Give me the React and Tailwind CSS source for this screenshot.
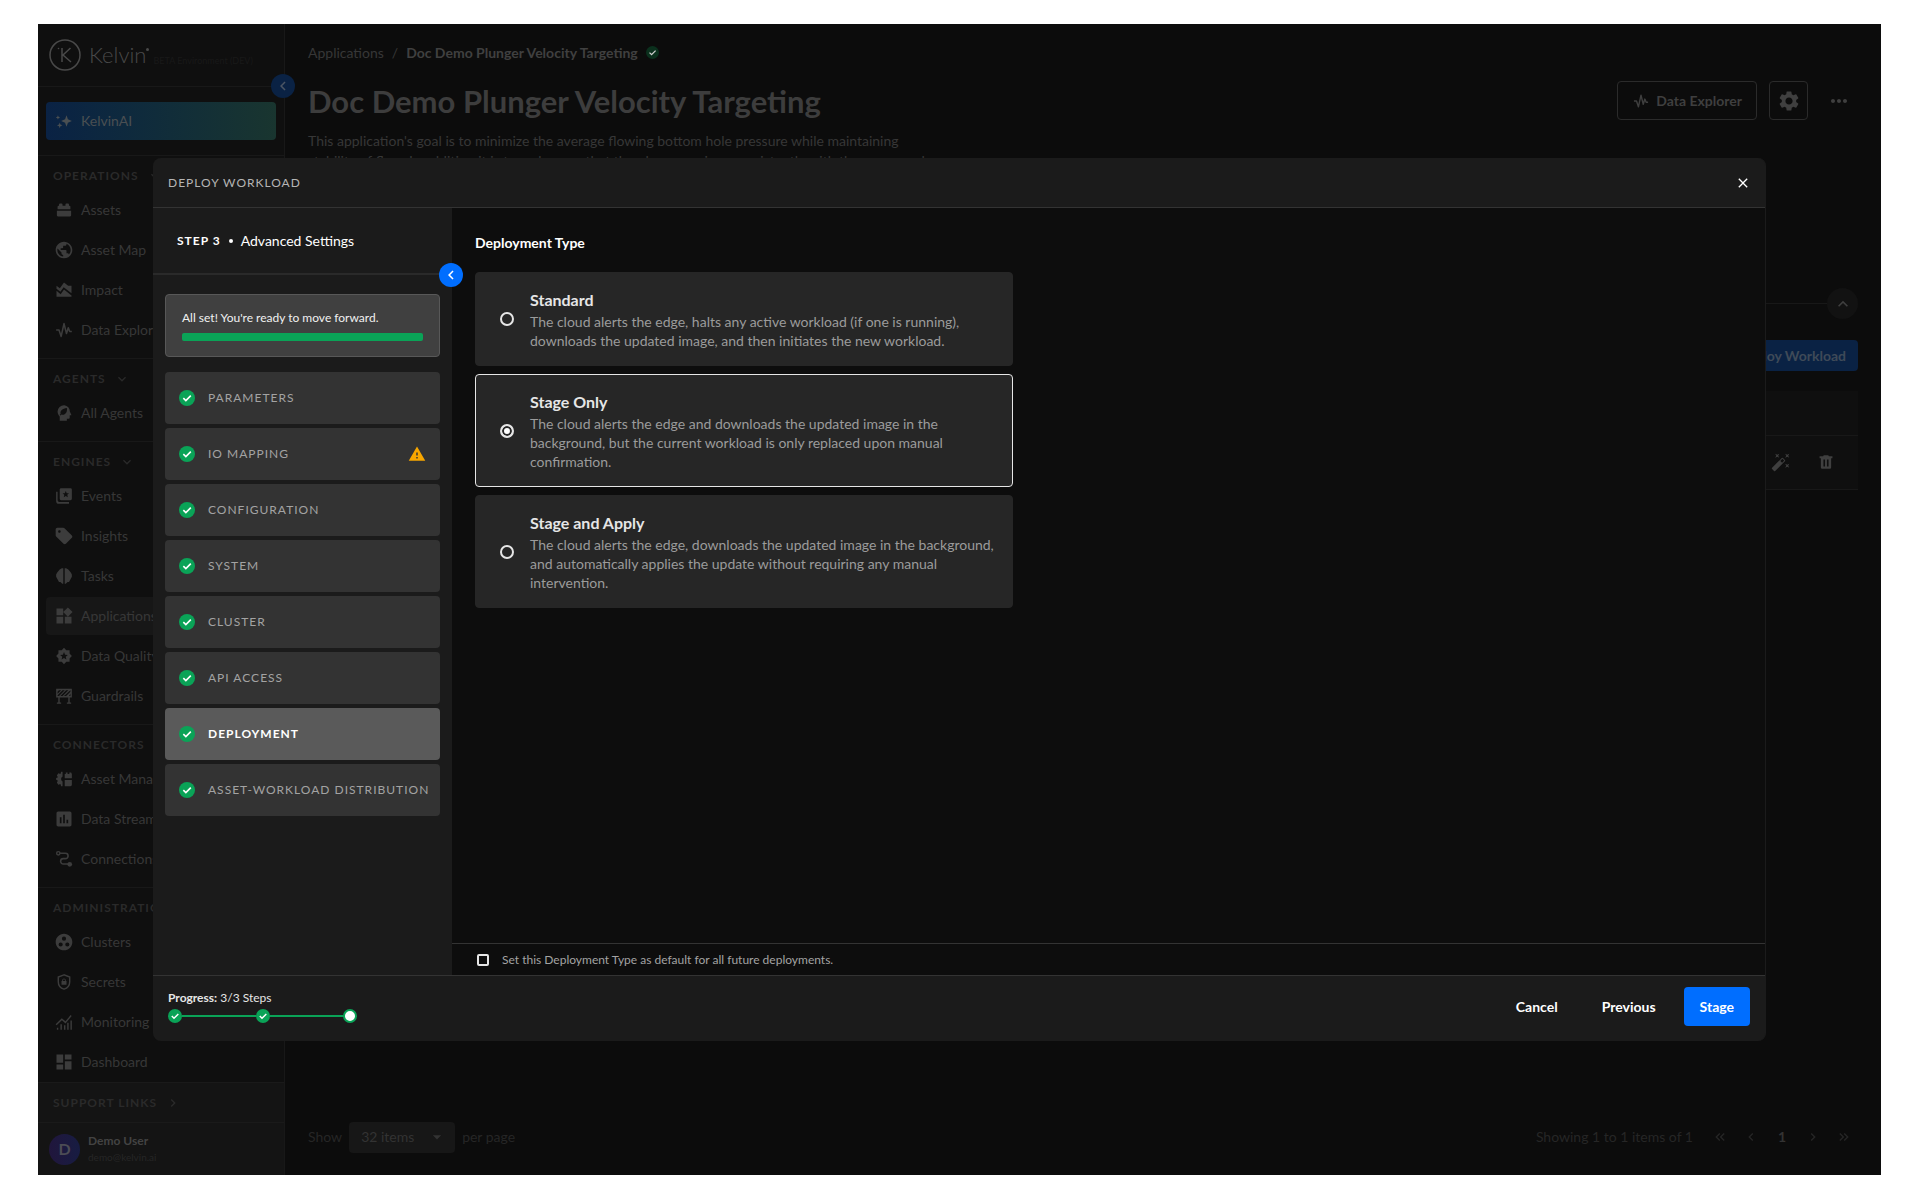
import { useState } from 'react'
import {
  MdPublic, MdAreaChart, MdSell, MdWidgets, MdAssessment, MdGroupWork, MdDashboard,
  MdSettings, MdMoreHoriz, MdWarning, MdClose, MdChevronLeft, MdChevronRight,
  MdExpandMore, MdExpandLess, MdKeyboardDoubleArrowLeft, MdKeyboardDoubleArrowRight,
  MdArrowDropDown, MdAutoFixHigh
} from 'react-icons/md'

function Icon({ children, viewBox = '-2 -2 28 28', className = 'size-[18px]' }) {
  return (
    <svg viewBox={viewBox} fill="currentColor" className={className} aria-hidden="true">
      {children}
    </svg>
  )
}

const AssetsIcon = (props) => (
  <Icon {...props}>
    <path d="M3 11V7.500q0-1.500 1.500-1.500H5V4.500Q5 3 6.500 3h2Q10 3 10 4.500V6h4V4.500Q14 3 15.500 3h2Q19 3 19 4.500V6h.5Q21 6 21 7.500V11zM2 13h20v6.500Q22 21 20.500 21h-17Q2 21 2 19.500z" />
  </Icon>
)

const PulseIcon = (props) => (
  <Icon {...props}>
    <path d="M1 12h4l3 9 4-18 3.500 14 2.500-8 2 5h3" fill="none" stroke="currentColor" strokeWidth="2.200" strokeLinejoin="round" />
  </Icon>
)

const AgentIcon = (props) => (
  <Icon {...props}>
    <path fillRule="evenodd" d="M12.500 1a9 9 0 0 0-9.500 9c0 3 1.300 5.300 3 7v6h10v-3h2.500q1.500 0 1.500-1.500V15h2.500l-2.300-5A9 9 0 0 0 12.500 1zM16 5c1 5-1.500 9.500-6 9.500q-1.200 0-1.800-.5L7 15.500 6 14.700l1.300-1.600C6 9 10 5.500 16 5z" />
  </Icon>
)

const EventsIcon = (props) => (
  <Icon {...props}>
    <path fillRule="evenodd" d="M8 1h13q2 0 2 2v13q0 2-2 2H8q-2 0-2-2V3q0-2 2-2zm6.500 4-1.300 3-3.200.3 2.400 2.100-.7 3.200 2.800-1.700 2.800 1.700-.7-3.200L19 8.300 15.800 8z" />
    <path d="M1 6h2v12q0 2.500 2.500 2.500H19V23H5q-4 0-4-4z" />
  </Icon>
)

const TasksIcon = (props) => (
  <Icon {...props}>
    <path d="M11 1v22H9.500L7 20.500H5L2.500 16 1 13v-3l1.500-3L6 3l3-2zM13 1v22h1.500l2.500-2.500h2l2.500-4.500 1.500-3v-3l-1.500-3L18 3l-3-2z" />
  </Icon>
)

const QualityIcon = (props) => (
  <Icon {...props}>
    <path fillRule="evenodd" d="m12 .5 3.200 3.300h4.600v4.700l3.200 3.500-3.200 3.400v4.700h-4.600L12 23.500l-3.200-3.400H4.200v-4.700L1 12l3.200-3.500V3.800h4.600zm0 6-1.500 3.700-3.900.3 3 2.600-1 3.900 3.400-2.100 3.400 2.100-1-3.900 3-2.600-3.900-.3z" />
  </Icon>
)

const GuardrailsIcon = (props) => (
  <Icon {...props}>
    <path fillRule="evenodd" d="M1 2h22v12h-3v7h2v2h-6v-2h2v-7H6v7h2v2H2v-2h2v-7H1zm2 7 5-5H5L3 6zm2 3 8-8h-3l-7 7v1zm5 0 8-8h-3l-8 8zm5 0 6-6V4l-9 8zm4 0h2v-3z" />
  </Icon>
)

const AssetManagerIcon = (props) => (
  <Icon {...props}>
    <path d="M10 2v6.500a4 4 0 0 0 0 7V22H8l-1-3-3 1-2-3 1.500-2.500L1 13v-2.500l2.500-1L2 7l2-3 3 1 1-3zM13 11V5h1.500V3H17v2h2.500V3H22l1 2v6zM13 13.500h10V20q0 2-2 2h-8z" />
  </Icon>
)

const ConnectionsIcon = (props) => (
  <Icon {...props}>
    <path d="M6 4h8a3.500 3.500 0 0 1 0 7.500h-3A3.500 3.500 0 0 0 11 19h7" fill="none" stroke="currentColor" strokeWidth="2.200" />
    <circle cx="4" cy="4" r="2.300" fill="none" stroke="currentColor" strokeWidth="2" />
    <circle cx="20" cy="19.500" r="3.300" />
  </Icon>
)

const SecretsIcon = (props) => (
  <Icon {...props}>
    <path d="M12 2 4 5v6.500c0 5 3.400 9 8 10.500 4.600-1.500 8-5.500 8-10.500V5z" fill="none" stroke="currentColor" strokeWidth="2" />
    <path fillRule="evenodd" d="M8.500 10.500h1V9.500a2.500 2.500 0 0 1 5 0v1h1V16h-7zm2.200 0h2.600V9.500a1.300 1.300 0 0 0-2.600 0z" />
  </Icon>
)

const MonitoringIcon = (props) => (
  <Icon {...props}>
    <path d="M2 20h2v3H2zM7 15h2v8H7zM12 16.500h2V23h-2zM16.500 13h2v10h-2zM21 10h2v13h-2z" />
    <path d="m1 16 8-8 5 4.500L22 3" fill="none" stroke="currentColor" strokeWidth="2" />
  </Icon>
)

const SparkleIcon = (props) => (
  <Icon {...props}>
    <path d="m15.500 4 2 5.500L23 12l-5.500 2.500-2 5.500-2-5.500L8 12l5.500-2.500zM3.500 4l.8 2 2.200 1-2.200 1-.8 2-.8-2-2.200-1 2.200-1zM6 14l1 2.800L9.800 18 7 19.200 6 22l-1-2.800L2.200 18 5 16.800z" />
  </Icon>
)

const TrashIcon = (props) => (
  <Icon {...props}>
    <path fillRule="evenodd" d="M2 3h5.500l1-1.500h7l1 1.500H22v3h-2v14.500q0 2-2 2H6q-2 0-2-2V6H2zm6 5v11h2.500V8zm5.500 0v11H16V8z" />
  </Icon>
)

function CheckBadge({ className = 'size-4 text-[#0aa357]' }) {
  return (
    <Icon viewBox="0 0 24 24" className={`shrink-0 ${className}`}>
      <circle cx="12" cy="12" r="12" />
      <path d="m6.500 12.200 3.800 3.800 7.400-7.500" fill="none" stroke="#fff" strokeWidth="2.400" />
    </Icon>
  )
}

const sections = [
  {
    title: 'Operations',
    items: [
      { label: 'Assets', icon: AssetsIcon },
      { label: 'Asset Map', icon: MdPublic },
      { label: 'Impact', icon: MdAreaChart },
      { label: 'Data Explorer', icon: PulseIcon }
    ]
  },
  { title: 'Agents', items: [{ label: 'All Agents', icon: AgentIcon }] },
  {
    title: 'Engines',
    items: [
      { label: 'Events', icon: EventsIcon },
      { label: 'Insights', icon: MdSell },
      { label: 'Tasks', icon: TasksIcon },
      { label: 'Applications', icon: MdWidgets, active: true },
      { label: 'Data Quality', icon: QualityIcon },
      { label: 'Guardrails', icon: GuardrailsIcon }
    ]
  },
  {
    title: 'Connectors',
    items: [
      { label: 'Asset Manager', icon: AssetManagerIcon },
      { label: 'Data Streams', icon: MdAssessment },
      { label: 'Connections', icon: ConnectionsIcon }
    ]
  },
  {
    title: 'Administration',
    items: [
      { label: 'Clusters', icon: MdGroupWork },
      { label: 'Secrets', icon: SecretsIcon },
      { label: 'Monitoring', icon: MonitoringIcon },
      { label: 'Dashboard', icon: MdDashboard }
    ]
  }
]

const steps = [
  { label: 'Parameters' },
  { label: 'IO Mapping', warning: true },
  { label: 'Configuration' },
  { label: 'System' },
  { label: 'Cluster' },
  { label: 'API Access' },
  { label: 'Deployment' },
  { label: 'Asset-Workload Distribution' }
]

const deploymentTypes = [
  {
    id: 'standard',
    title: 'Standard',
    text: 'The cloud alerts the edge, halts any active workload (if one is running), downloads the updated image, and then initiates the new workload.'
  },
  {
    id: 'stage',
    title: 'Stage Only',
    text: 'The cloud alerts the edge and downloads the updated image in the background, but the current workload is only replaced upon manual confirmation.'
  },
  {
    id: 'apply',
    title: 'Stage and Apply',
    text: 'The cloud alerts the edge, downloads the updated image in the background, and automatically applies the update without requiring any manual intervention.'
  }
]

function Sidebar() {
  return (
    <aside className="relative flex w-[247px] shrink-0 flex-col border-r border-[#181818] bg-[#0f0f0f] text-[#373737]">
      <div className="flex h-[62px] shrink-0 items-center px-[11px] text-[#494949]">
        <svg viewBox="0 0 32 32" className="size-8" fill="none" stroke="currentColor" aria-hidden="true">
          <circle cx="16" cy="16" r="15" strokeWidth="1.500" />
          <path d="M13 9v14M21.500 9 14 16l8 7" strokeWidth="1.500" />
          <circle cx="9.500" cy="9.500" r=".8" fill="currentColor" stroke="none" />
        </svg>
        <span className="ml-2 text-[22px] leading-8 font-light">Kelvin</span>
        <span className="mb-3 size-[3px] rounded-full bg-[#494949]" />
        <span className="mt-3 ml-1 text-[9px] text-[#191919]">BETA Environment (DEV)</span>
      </div>
      <div className="shrink-0 border-t border-[#181818] px-2 py-[15px]">
        <a href="#ai" className="flex h-[38px] items-center gap-[7px] rounded bg-linear-to-r from-[#0a2244] to-[#19352f] px-2 text-sm text-[#4a4f52]">
          <SparkleIcon className="size-5" />
          KelvinAI
        </a>
      </div>
      <nav className="min-h-0 flex-1 overflow-hidden">
        {sections.map(section => (
          <div key={section.title} className="border-t border-[#181818] pb-[9px] last:pb-0">
            <button className="flex h-[35px] items-center gap-2 pt-1 pl-[15px] text-xs font-bold tracking-[1px] text-[#2a2a2a] uppercase">
              {section.title}
              <MdExpandMore className="size-4" />
            </button>
            <ul className="flex flex-col gap-0.5 px-2">
              {section.items.map(({ label, icon: Glyph, active }) => (
                <li key={label}>
                  <a href="#nav" className={`flex h-[38px] items-center gap-[7px] rounded px-2 text-sm ${active ? 'bg-[#171717]' : ''}`}>
                    <Glyph className="size-5 text-[#3c3c3c]" />
                    {label}
                  </a>
                </li>
              ))}
            </ul>
          </div>
        ))}
      </nav>
      <div className="shrink-0 bg-[#141414]">
        <button className="flex h-10 w-full items-center gap-2 border-t border-[#1a1a1a] pl-[15px] text-xs font-bold tracking-[1px] text-[#2a2a2a] uppercase">
          Support Links
          <MdChevronRight className="size-4" />
        </button>
        <div className="flex h-[53px] items-center gap-2 border-t border-[#1a1a1a] px-[11px]">
          <span className="flex size-[31px] items-center justify-center rounded-full bg-linear-to-r from-[#20163c] to-[#171c42] text-base font-bold text-[#4c4c55]">D</span>
          <div>
            <p className="text-xs leading-4 font-bold text-[#434343]">Demo User</p>
            <p className="text-[10px] leading-4 text-[#262626]">demo@kelvin.ai</p>
          </div>
        </div>
      </div>
      <button aria-label="Collapse menu" className="absolute top-[50px] -right-[11px] flex size-6 items-center justify-center rounded-full bg-[#0a2244] text-[#4b5563]">
        <MdChevronLeft className="size-[18px]" />
      </button>
    </aside>
  )
}

function ApplicationPage() {
  return (
    <main className="flex min-w-0 flex-1 flex-col px-[23px] text-sm text-[#373737]">
      <div className="flex h-[57px] items-center gap-2">
        <a href="#applications">Applications</a>
        <span>/</span>
        <span className="font-bold text-[#404040]">Doc Demo Plunger Velocity Targeting</span>
        <CheckBadge className="size-[13px] text-[#0b3a22] opacity-80" />
      </div>
      <div className="flex items-center justify-between">
        <h1 className="text-[31px] leading-9 font-bold text-[#3d3d3d]">Doc Demo Plunger Velocity Targeting</h1>
        <div className="flex items-center gap-3">
          <button className="flex h-[39px] items-center gap-1.5 rounded border border-[#2b2b2b] px-3.5 font-bold text-[#3f3f3f]">
            <PulseIcon />
            Data Explorer
          </button>
          <button aria-label="Settings" className="flex size-[39px] items-center justify-center rounded border border-[#2b2b2b] text-[#3f3f3f]">
            <MdSettings className="size-6" />
          </button>
          <button aria-label="More" className="flex size-[38px] items-center justify-center text-[#3f3f3f]">
            <MdMoreHoriz className="size-6" />
          </button>
        </div>
      </div>
      <p className="mt-[11px] w-[660px] leading-5">
        This application's goal is to minimize the average flowing bottom hole pressure while maintaining<br />
        stability of flow. In addition it is to make sure that the plunger arrives consistently with the proper column
      </p>
      <div className="mt-[117px] flex items-center">
        <hr className="flex-1 border-[#181818]" />
        <button aria-label="Collapse section" className="flex size-[31px] items-center justify-center rounded-full bg-[#121212] text-[#3f3f3f]">
          <MdExpandLess className="size-5" />
        </button>
      </div>
      <button className="mt-[21px] h-[31px] self-end rounded bg-[#0a2244] px-3 font-bold text-[#3f4a58]">Deploy Workload</button>
      <table className="mt-5 w-full bg-[#0f0f0f]">
        <thead>
          <tr className="h-11 border-b border-[#181818]">
            <th aria-label="Workload" />
            <th aria-label="Actions" className="w-28" />
          </tr>
        </thead>
        <tbody>
          <tr className="h-[54px] border-b border-[#181818]">
            <td />
            <td>
              <div className="flex items-center justify-end gap-[26px] pr-[23px] text-[#3f3f3f]">
                <button aria-label="Edit"><MdAutoFixHigh className="size-5" /></button>
                <button aria-label="Delete"><TrashIcon /></button>
              </div>
            </td>
          </tr>
        </tbody>
      </table>
      <div className="mt-auto flex h-[76px] items-center justify-between text-[#262626]">
        <label className="flex items-center gap-[7px]">
          Show
          <span className="relative flex items-center">
            <select className="h-[31px] w-[106px] appearance-none rounded bg-[#171717] px-3 text-[#333]">
              <option>32 items</option>
            </select>
            <MdArrowDropDown className="pointer-events-none absolute right-2 size-5 text-[#333]" />
          </span>
          per page
        </label>
        <div className="flex items-center gap-[11px] pr-1">
          <span className="mr-1.5">Showing 1 to 1 items of 1</span>
          <button aria-label="First page" className="flex w-5 justify-center"><MdKeyboardDoubleArrowLeft className="size-4" /></button>
          <button aria-label="Previous page" className="flex w-5 justify-center"><MdChevronLeft className="size-4" /></button>
          <button className="w-5 font-bold text-[#333]">1</button>
          <button aria-label="Next page" className="flex w-5 justify-center"><MdChevronRight className="size-4" /></button>
          <button aria-label="Last page" className="flex w-5 justify-center"><MdKeyboardDoubleArrowRight className="size-4" /></button>
        </div>
      </div>
    </main>
  )
}

function StepList() {
  return (
    <div className="relative flex w-[299px] shrink-0 flex-col bg-[#1b1b1b]">
      <div className="flex h-[67px] items-center gap-2 border-b-2 border-[#2a2a2a] pl-6 text-sm text-white">
        <span className="text-xs font-bold tracking-[1px]">STEP 3</span>
        <span className="size-1 rounded-full bg-white" />
        <span>Advanced Settings</span>
      </div>
      <div className="flex flex-col px-3 pt-[19px]">
        <div className="mb-[15px] h-[63px] rounded-sm border border-[#585858] bg-[#404040] px-4 pt-[15px] text-xs text-[#f0f0f0]">
          <p className="leading-4">All set! You're ready to move forward.</p>
          <div className="mt-[7px] h-2 rounded-xs bg-[#0aa357]" />
        </div>
        <ol className="flex flex-col gap-1">
          {steps.map(step => {
            const active = step.label === 'Deployment'
            return (
              <li key={step.label}>
                <button className={`flex h-[52px] w-full items-center gap-[13px] rounded-sm px-3.5 text-xs tracking-[1px] uppercase ${active ? 'bg-[#5a5a5a] font-bold text-white' : 'bg-[#333] text-[#a3a3a3]'}`}>
                  <CheckBadge />
                  <span className="whitespace-nowrap">{step.label}</span>
                  {step.warning && <MdWarning className="ml-auto size-[18px] text-[#f7a600]" />}
                </button>
              </li>
            )
          })}
        </ol>
      </div>
      <button aria-label="Collapse steps" className="absolute top-[55px] -right-[11px] flex size-6 items-center justify-center rounded-full bg-[#006eff] text-white">
        <MdChevronLeft className="size-[18px]" />
      </button>
    </div>
  )
}

function DeployModal() {
  const [selected, setSelected] = useState('stage')
  const [isDefault, setIsDefault] = useState(false)

  return (
    <div role="dialog" aria-label="Deploy Workload" className="flex min-w-0 flex-1 flex-col overflow-hidden rounded-lg border-r border-[#1b1b1b] bg-[#1b1b1b] text-sm">
      <header className="flex h-[50px] shrink-0 items-center justify-between border-b border-[#333] pr-3.5 pl-[15px]">
        <h2 className="text-xs tracking-[1px] text-[#b5b5b5]">DEPLOY WORKLOAD</h2>
        <button aria-label="Close" className="text-white"><MdClose className="size-4" /></button>
      </header>
      <div className="flex min-h-0 flex-1">
        <StepList />
        <div className="flex min-w-0 flex-1 flex-col bg-[#0d0d0d]">
          <fieldset className="flex flex-1 flex-col gap-2 px-[23px] pt-6">
            <legend className="contents">
              <span className="mb-[10px] leading-[22px] font-bold text-white">Deployment Type</span>
            </legend>
            {deploymentTypes.map(type => (
              <label
                key={type.id}
                className={`flex w-full max-w-[538px] items-center gap-4 rounded-sm border bg-[#262626] py-[15px] pr-2 pl-6 ${selected === type.id ? 'border-[#e6e6e6]' : 'border-[#262626]'}`}
              >
                <input
                  type="radio"
                  name="deployment-type"
                  checked={selected === type.id}
                  onChange={() => setSelected(type.id)}
                  className="size-3.5 shrink-0 appearance-none rounded-full border-2 border-[#e6e6e6] checked:bg-white checked:shadow-[inset_0_0_0_2px_#262626]"
                />
                <span>
                  <span className="block text-base leading-6 font-bold text-[#e6e6e6]">{type.title}</span>
                  <span className="block leading-[19px] text-[#9b9b9b]">{type.text}</span>
                </span>
              </label>
            ))}
          </fieldset>
          <label className="flex h-8 shrink-0 items-center gap-[13px] border-t border-[#333] px-[25px] text-xs text-[#a3a3a3]">
            <input
              type="checkbox"
              checked={isDefault}
              onChange={e => setIsDefault(e.target.checked)}
              className="size-3 appearance-none rounded-xs border-2 border-[#e6e6e6] checked:bg-[#006eff]"
            />
            Set this Deployment Type as default for all future deployments.
          </label>
        </div>
      </div>
      <footer className="flex h-[66px] shrink-0 items-center justify-between border-t border-[#333] px-[15px] pb-1">
        <div className="text-xs text-[#e6e6e6]">
          <p className="leading-4"><span className="font-bold">Progress:</span> 3/3 Steps</p>
          <div className="mt-[3px] flex w-[189px] items-center">
            <CheckBadge className="size-3.5 text-[#0aa357]" />
            <span className="h-0.5 flex-1 bg-[#0aa357]" />
            <CheckBadge className="size-3.5 text-[#0aa357]" />
            <span className="h-0.5 flex-1 bg-[#0aa357]" />
            <span className="size-3.5 rounded-full border-2 border-[#0aa357] bg-white" />
          </div>
        </div>
        <div className="flex items-center gap-3 font-bold text-white">
          <button className="h-[39px] px-4">Cancel</button>
          <button className="h-[39px] px-4">Previous</button>
          <button className="h-[39px] rounded-sm bg-[#006eff] px-4">Stage</button>
        </div>
      </footer>
    </div>
  )
}

export default function App() {
  return (
    <div className="flex min-h-screen bg-white pt-6 pr-[39px] pb-[25px] pl-[38px] font-['Lato',sans-serif]">
      <div className="relative flex flex-1 bg-[#0c0c0c]">
        <Sidebar />
        <ApplicationPage />
        <div className="absolute inset-0 flex px-[115px] py-[134px]">
          <DeployModal />
        </div>
      </div>
    </div>
  )
}
